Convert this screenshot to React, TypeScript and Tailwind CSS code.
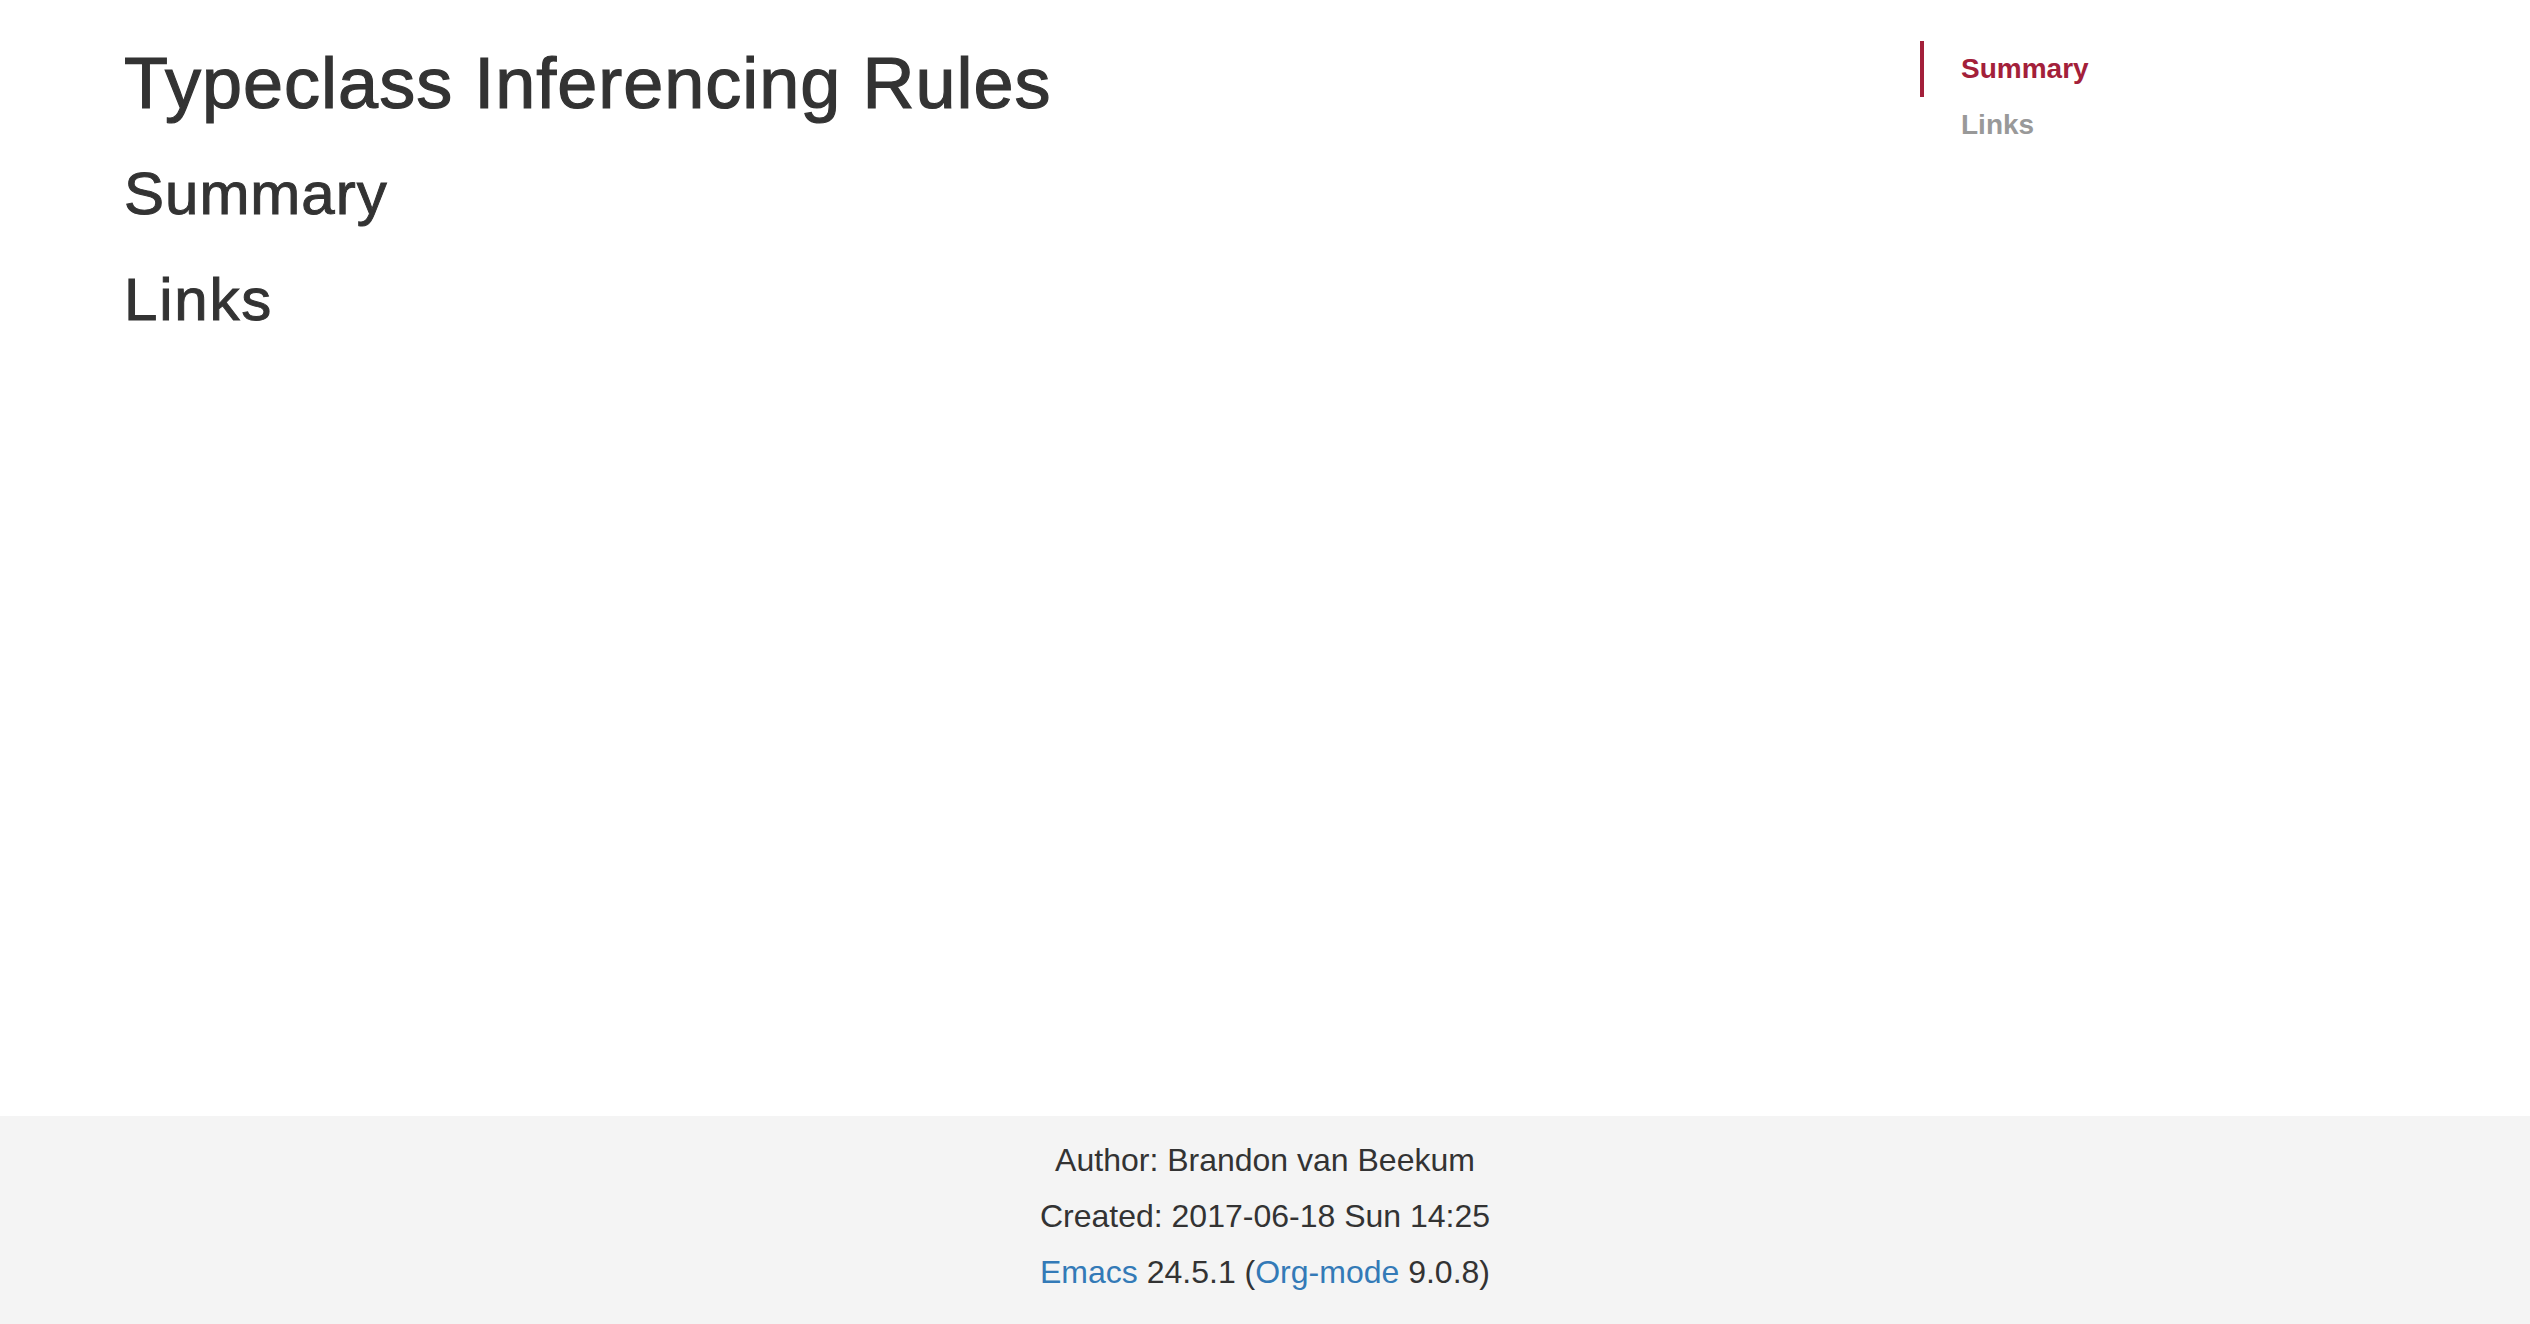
export default function App() {
  const toc = [
    { label: "Summary", active: true },
    { label: "Links", active: false },
  ];

  return (
    <div className="min-h-screen flex flex-col bg-white font-['Liberation_Sans',Arial,sans-serif] text-[#333]">
      <div className="flex-1 flex">
        {/* Content */}
        <div className="flex-1 pl-[124px] pt-[43px]">
          <h1 className="text-[72px] leading-[80px] font-normal tracking-[1px] [-webkit-text-stroke:1.2px_#333]">
            Typeclass Inferencing Rules
          </h1>
          <h2 className="mt-[38px] text-[60px] leading-[66px] font-normal tracking-[1px] [-webkit-text-stroke:1px_#333]">
            Summary
          </h2>
          <h2 className="mt-[40px] text-[60px] leading-[66px] font-normal tracking-[1.8px] [-webkit-text-stroke:1px_#333]">
            Links
          </h2>
        </div>

        {/* Table of contents */}
        <nav className="w-[610px] pt-[41px]">
          <ul>
            {toc.map((item) => (
              <li key={item.label}>
                <a
                  href="#"
                  className={
                    item.active
                      ? "block border-l-4 border-[#a3203a] pl-[37px] py-2 text-[28px] leading-[40px] font-bold text-[#a3203a]"
                      : "block pl-[41px] py-2 text-[28px] leading-[40px] font-bold text-[#999]"
                  }
                >
                  {item.label}
                </a>
              </li>
            ))}
          </ul>
        </nav>
      </div>

      {/* Footer */}
      <footer className="bg-[#f4f4f4] pt-4 pb-6 text-center text-[32px] leading-[56px] text-[#333]">
        <p>Author: Brandon van Beekum</p>
        <p>Created: 2017-06-18 Sun 14:25</p>
        <p>
          <a href="#" className="text-[#337ab7]">Emacs</a> 24.5.1 (
          <a href="#" className="text-[#337ab7]">Org-mode</a> 9.0.8)
        </p>
      </footer>
    </div>
  );
}
